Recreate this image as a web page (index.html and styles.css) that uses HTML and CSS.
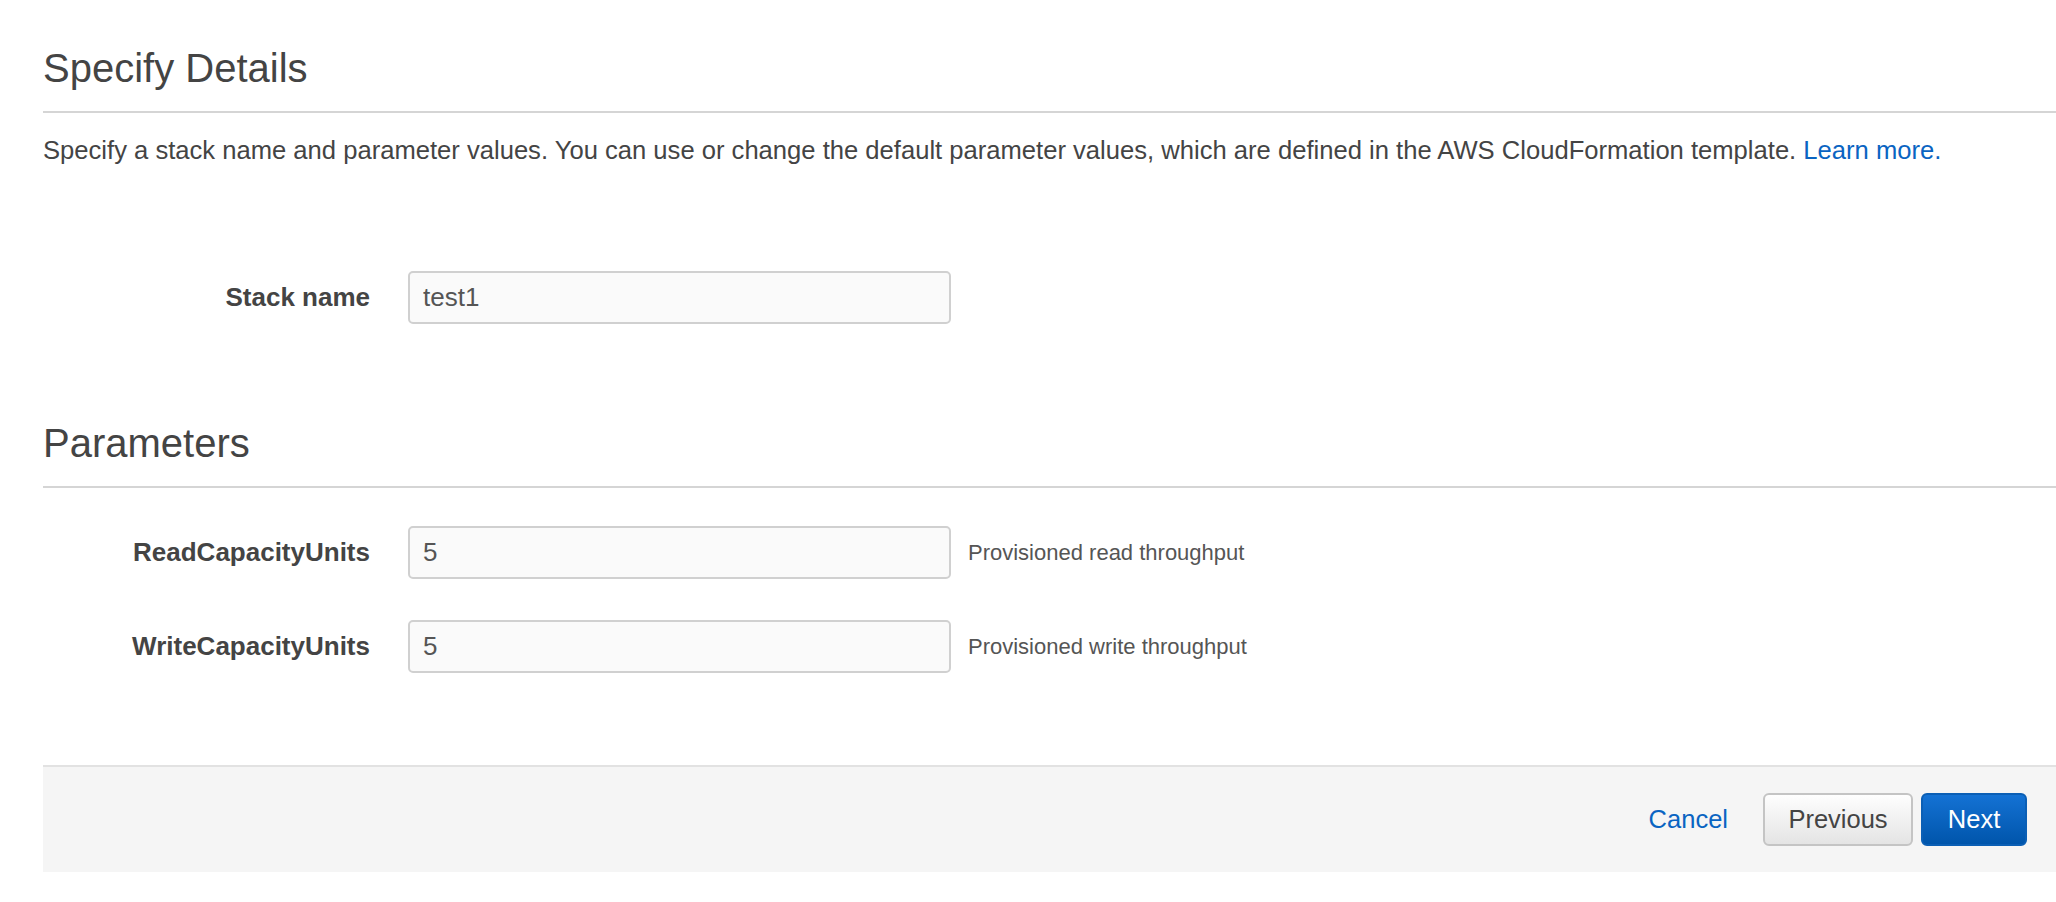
FILE: index.html
```html
<!DOCTYPE html>
<html lang="en">
<head>
    <meta charset="UTF-8">
    <meta name="viewport" content="width=device-width, initial-scale=1.0">
    <title>Specify Details</title>
    <link rel="stylesheet" href="styles.css">
</head>
<body>
    <div class="page">
        <h2 class="section-title">Specify Details</h2>
        <p class="intro">Specify a stack name and parameter values. You can use or change the default parameter values, which are defined in the AWS CloudFormation template. <a href="#">Learn more.</a></p>

        <div class="form-row stack-row">
            <label class="form-label" for="stackName">Stack name</label>
            <input class="form-input" id="stackName" type="text" value="test1">
        </div>

        <h2 class="section-title params-title">Parameters</h2>

        <div class="form-row">
            <label class="form-label" for="readUnits">ReadCapacityUnits</label>
            <input class="form-input" id="readUnits" type="text" value="5">
            <span class="form-help">Provisioned read throughput</span>
        </div>
        <div class="form-row">
            <label class="form-label" for="writeUnits">WriteCapacityUnits</label>
            <input class="form-input" id="writeUnits" type="text" value="5">
            <span class="form-help">Provisioned write throughput</span>
        </div>

        <div class="footer-bar">
            <a href="#" class="cancel-link">Cancel</a>
            <button class="btn btn-default">Previous</button>
            <button class="btn btn-primary">Next</button>
        </div>
    </div>
</body>
</html>
```

FILE: styles.css
```css
body {
    margin: 0;
    font-family: 'Liberation Sans', Arial, sans-serif;
    color: #444;
    background: #fff;
}

.page {
    padding-left: 43px;
}

.section-title {
    margin: 0;
    padding: 44px 0 19px;
    font-size: 40px;
    line-height: 48px;
    font-weight: normal;
    color: #444;
    border-bottom: 2px solid #d5d5d5;
}

.params-title {
    padding-top: 95px;
}

.intro {
    margin: 21px 0 0;
    font-size: 25.6px;
    line-height: 32px;
    color: #444;
}

.intro a {
    color: #0a64c2;
    text-decoration: none;
}

/* 表单行 */
.form-row {
    display: flex;
    align-items: center;
    margin-top: 41px;
}

.stack-row {
    margin-top: 105px;
}

.params-title + .form-row {
    margin-top: 38px;
}

.form-label {
    width: 365px;
    padding-right: 38px;
    box-sizing: border-box;
    text-align: right;
    font-size: 26px;
    font-weight: bold;
    color: #444;
}

.form-input {
    width: 543px;
    height: 53px;
    box-sizing: border-box;
    padding: 0 13px;
    border: 2px solid #d0d0d0;
    border-radius: 5px;
    background: #fafafa;
    font-family: inherit;
    font-size: 26px;
    color: #555;
    outline: none;
}

.form-help {
    margin-left: 17px;
    font-size: 22px;
    color: #555;
}

/* 底部按钮栏 */
.footer-bar {
    display: flex;
    align-items: center;
    justify-content: flex-end;
    margin-top: 92px;
    height: 107px;
    box-sizing: border-box;
    padding-right: 29px;
    background: #f5f5f5;
    border-top: 2px solid #e2e2e2;
}

.cancel-link {
    margin-right: 35px;
    font-size: 25.5px;
    color: #0a64c2;
    text-decoration: none;
}

.btn {
    height: 53px;
    box-sizing: border-box;
    border-radius: 6px;
    font-family: inherit;
    font-size: 25.5px;
    cursor: pointer;
}

.btn-default {
    width: 150px;
    margin-right: 8px;
    border: 2px solid #c4c4c4;
    background: linear-gradient(#fefefe, #e4e4e4);
    color: #444;
}

.btn-primary {
    width: 106px;
    border: 2px solid #0b5fb5;
    background: linear-gradient(#1472d4, #0055ab);
    color: #fff;
}
```
